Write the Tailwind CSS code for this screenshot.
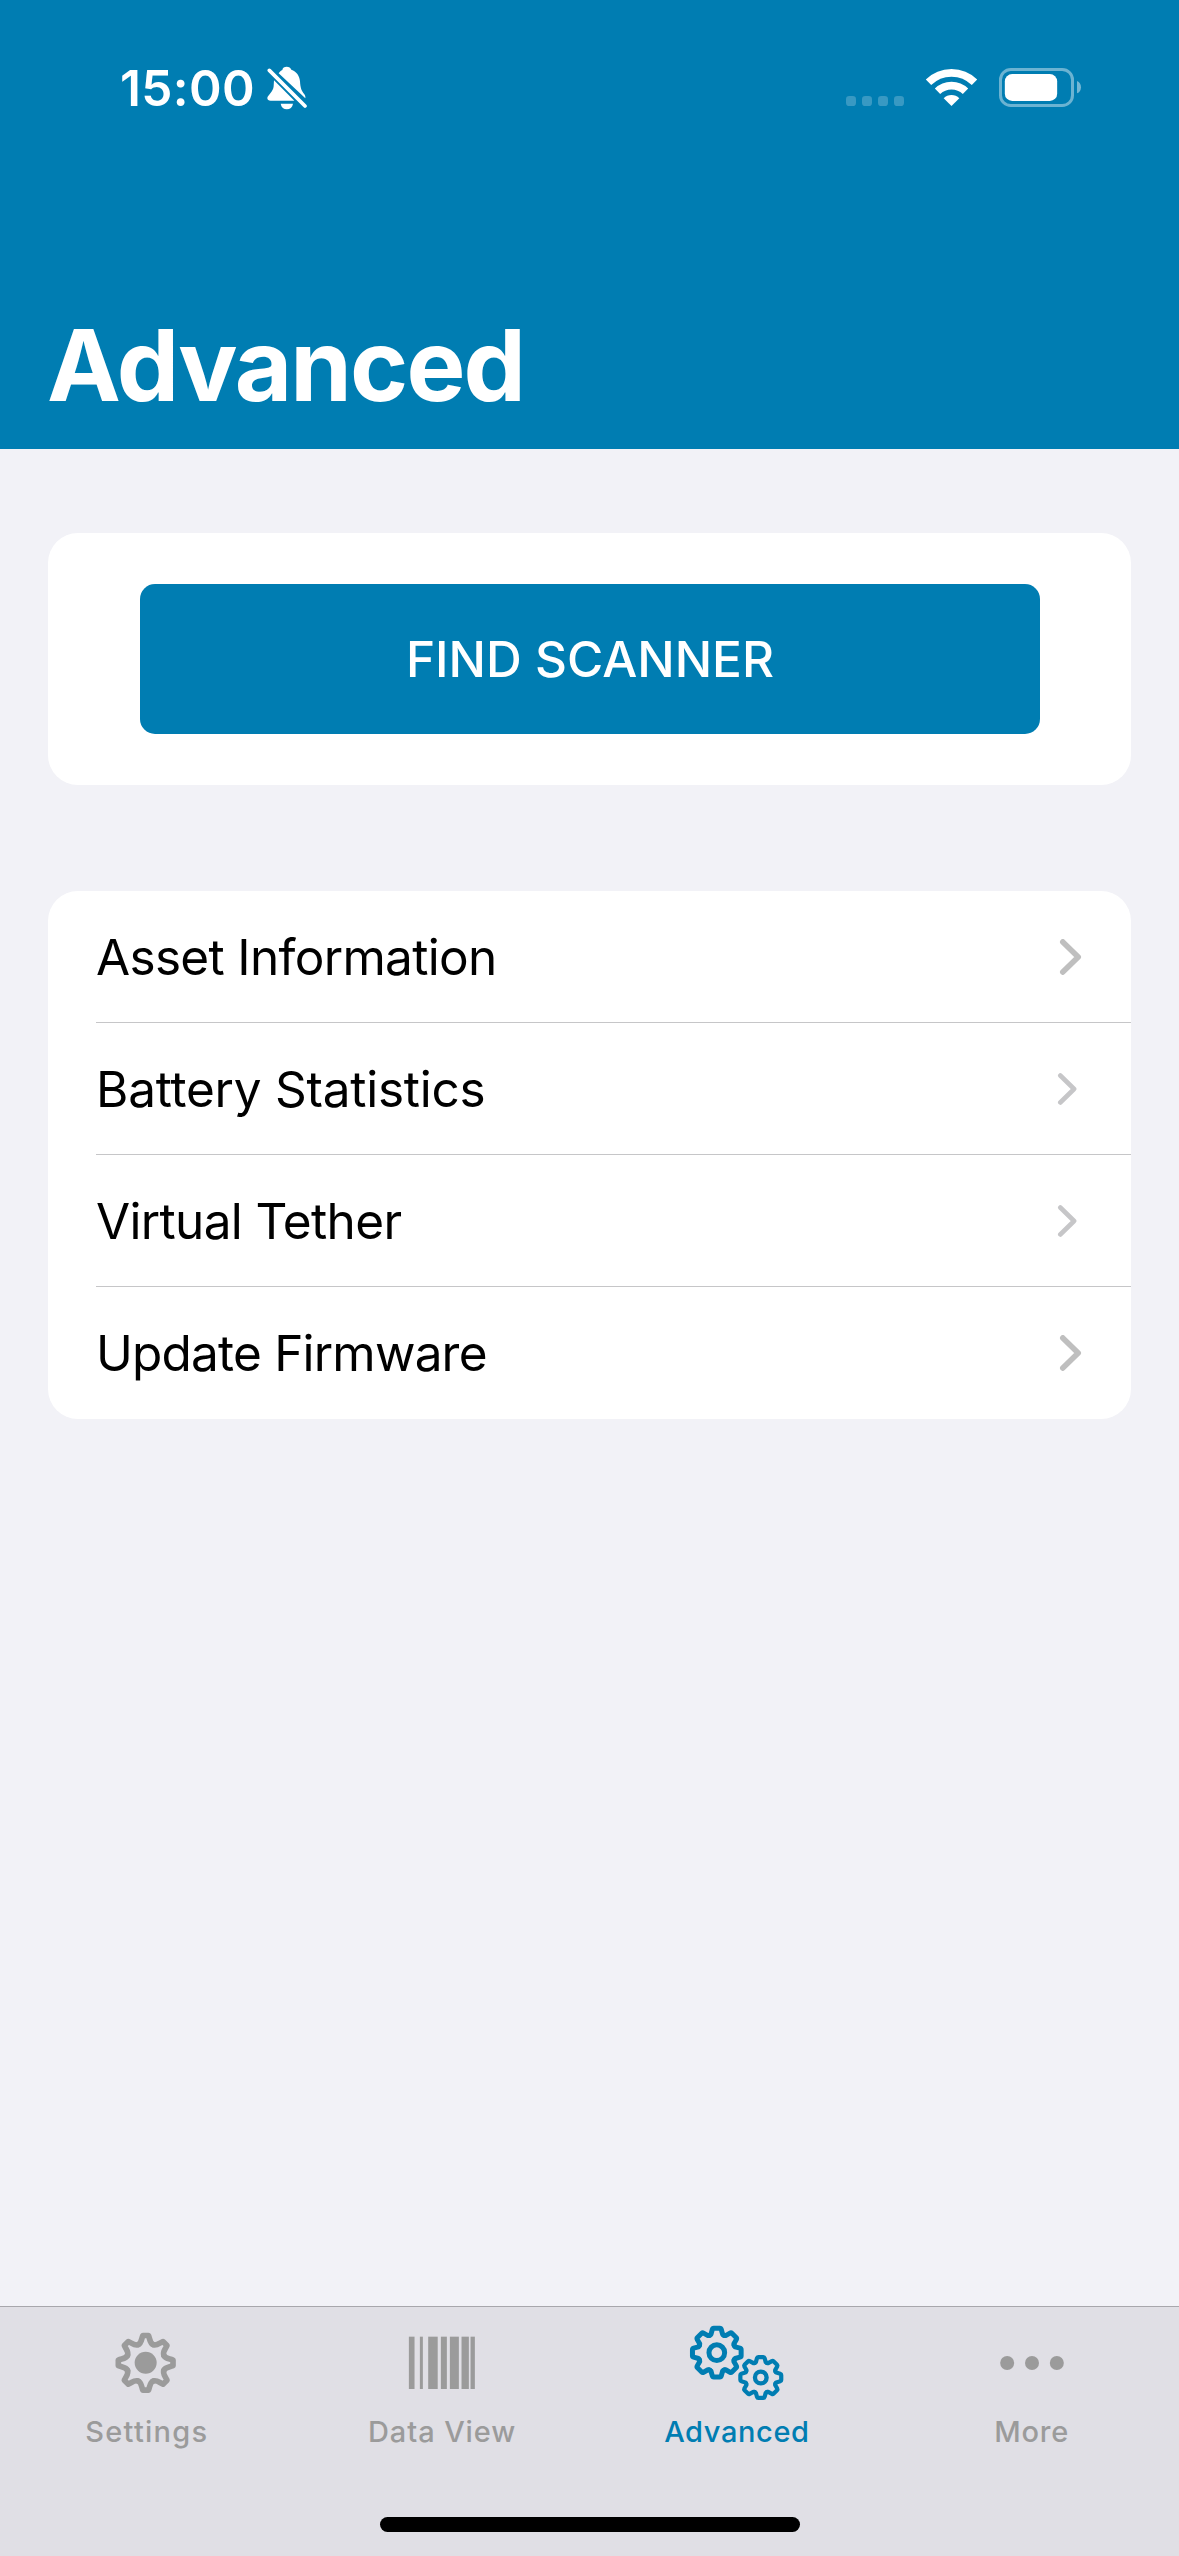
<!DOCTYPE html>
<html lang="en">
<head>
<meta charset="utf-8">
<title>Advanced</title>
<script src="https://cdn.jsdelivr.net/npm/@tailwindcss/browser@4"></script>
</head>
<body class="bg-[#f2f2f7] font-['Inter',sans-serif]">
<div class="flex flex-col w-[1179px] h-[2556px] overflow-hidden">

  <header class="flex flex-col h-[449px] shrink-0 bg-[#007db2] text-white">
    <div class="flex items-center justify-between h-[176px] pl-[120px] pr-[97px]">
      <div class="flex items-center">
        <span class="pt-[2px] text-[49.5px] leading-none font-semibold tracking-[0.38px]">15:00</span>
        <!-- muted bell -->
        <svg class="w-[40px] h-[44px] ml-[12px]" viewBox="502 49 120 132" fill="#fff">
          <path d="M537 71C540 66 544 63 548 61C549 54 554 51 561 51C568 51 573 54 575 60C590 65 600 78 601 95C602 116 606 124 614 134C616 137 618 140 617 146Z"/>
          <path d="M523 92L584 153H513C507 153 503 151 503 146C503 137 521 127 522 110Z"/>
          <path d="M543 162H580C578 173 571 179 561.500 179C552 179 545 173 543 162Z"/>
          <path d="M509 62L616 169" stroke="#fff" stroke-width="11" stroke-linecap="round"/>
        </svg>
      </div>
      <div class="flex items-center">
        <!-- signal dots, wifi, battery -->
        <svg class="w-[236px] h-[40px]" viewBox="78 54 708 120" fill="none">
          <g fill="#fff" fill-opacity=".22">
            <rect x="78" y="138" width="30" height="30" rx="10"/>
            <rect x="126" y="138" width="30" height="30" rx="10"/>
            <rect x="174" y="138" width="30" height="30" rx="10"/>
            <rect x="222" y="138" width="30" height="30" rx="10"/>
          </g>
          <path d="M325.500 97A98 98 0 0 1 463.500 97" stroke="#fff" stroke-width="23"/>
          <path d="M352.500 124A60 60 0 0 1 436.500 124" stroke="#fff" stroke-width="23"/>
          <path d="M371 144.500A34 34 0 0 1 418 144.500L394.500 168Z" fill="#fff"/>
          <rect x="541.500" y="58.500" width="216" height="108" rx="31" stroke="#fff" stroke-opacity=".42" stroke-width="9"/>
          <rect x="554.500" y="72" width="157" height="81" rx="22" fill="#fff"/>
          <path d="M771 93C787 99 787 124 771 130Z" fill="#fff" fill-opacity=".45"/>
        </svg>
      </div>
    </div>
    <h1 class="mt-auto pb-[33px] pl-[47px] text-[99px] leading-[102px] font-bold tracking-[-1.9px]">Advanced</h1>
  </header>

  <main class="flex flex-col grow px-[48px] pt-[84px] gap-[106px]">
    <section class="flex flex-col h-[252px] shrink-0 bg-white rounded-[30px] pl-[92px] pr-[91px] py-[51px]">
      <button class="h-[150px] pt-[2px] bg-[#007db2] rounded-[15px] text-white text-[49.5px] leading-none font-medium">FIND SCANNER</button>
    </section>

    <ul class="flex flex-col bg-white rounded-[30px] pl-[48px] text-black text-[49.5px] leading-none">
      <li class="flex items-center justify-between h-[132px] pr-[48px] border-b border-[#c6c6c8]">
        <span class="pt-[2px] tracking-[-0.68px]">Asset Information</span>
        <svg class="w-[24px] h-[36px]" viewBox="0 0 24 36" fill="none" stroke="#bfbfbf" stroke-width="5.600" stroke-linecap="round" stroke-linejoin="round"><path d="M3.800 2.900L19.200 18L3.800 33.100"/></svg>
      </li>
      <li class="flex items-center justify-between h-[132px] pr-[54px] border-b border-[#c6c6c8]">
        <span class="pt-[2px] tracking-[-0.24px]">Battery Statistics</span>
        <svg class="w-[20px] h-[32px]" viewBox="0 0 20 32" fill="none" stroke="#c6c6c8" stroke-width="4.600" stroke-linecap="round" stroke-linejoin="round"><path d="M3.300 2.500L17.100 16L3.300 29.500"/></svg>
      </li>
      <li class="flex items-center justify-between h-[132px] pr-[54px] border-b border-[#c6c6c8]">
        <span class="pt-[2px] tracking-[-0.66px]">Virtual Tether</span>
        <svg class="w-[20px] h-[32px]" viewBox="0 0 20 32" fill="none" stroke="#c6c6c8" stroke-width="4.600" stroke-linecap="round" stroke-linejoin="round"><path d="M3.300 2.500L17.100 16L3.300 29.500"/></svg>
      </li>
      <li class="flex items-center justify-between h-[132px] pr-[48px]">
        <span class="pt-[2px] tracking-[-0.8px]">Update Firmware</span>
        <svg class="w-[24px] h-[36px]" viewBox="0 0 24 36" fill="none" stroke="#bfbfbf" stroke-width="5.600" stroke-linecap="round" stroke-linejoin="round"><path d="M3.800 2.900L19.200 18L3.800 33.100"/></svg>
      </li>
    </ul>
  </main>

  <nav class="flex flex-col h-[250px] shrink-0 bg-[#e0dfe5] border-t border-[#a8a7ac] text-[#9b9b9b] text-[29px] leading-[37px] font-medium">
    <div class="grid grid-cols-4">
      <a class="flex flex-col items-center">
        <svg class="w-[180px] h-[106px]" viewBox="-8 51 540 318">
          <defs><path id="cog" d="M-22.600-54.500C-12-59-13-71-8.500-82H8.500C13-71 12-59 22.600-54.500"/></defs>
          <g transform="translate(258 218.500)" fill="none" stroke="#9b9b9b" stroke-width="17" stroke-linejoin="round" stroke-linecap="round">
            <use href="#cog"/><use href="#cog" transform="rotate(45)"/><use href="#cog" transform="rotate(90)"/><use href="#cog" transform="rotate(135)"/><use href="#cog" transform="rotate(180)"/><use href="#cog" transform="rotate(225)"/><use href="#cog" transform="rotate(270)"/><use href="#cog" transform="rotate(315)"/>
          </g>
          <circle cx="258" cy="218.500" r="33" fill="#9b9b9b"/>
        </svg>
        <span class="pr-[1px] tracking-[1.25px]">Settings</span>
      </a>
      <a class="flex flex-col items-center">
        <svg class="w-[180px] h-[106px]" viewBox="6.400 51 540 318" fill="#9b9b9b">
          <rect x="177" y="140" width="17" height="157"/><rect x="210" y="140" width="9" height="157"/><rect x="235" y="140" width="28.500" height="157"/><rect x="273" y="140" width="18" height="157"/><rect x="300" y="140" width="27" height="157"/><rect x="335" y="140" width="22" height="157"/><rect x="362" y="140" width="13" height="157"/>
        </svg>
        <span class="tracking-[0.9px]">Data View</span>
      </a>
      <a class="flex flex-col items-center text-[#007db2]">
        <svg class="w-[180px] h-[106px]" viewBox="-9.400 51 540 318" fill="none" stroke="#007db2" stroke-linejoin="round" stroke-linecap="round">
          <defs>
            <path id="tooth" d="M-22-52L-17.500-55L-13.500-69.500Q-12.500-73-9-73H9Q12.500-73 13.500-69.500L17.500-55L22-52"/>
            <g id="gear"><use href="#tooth"/><use href="#tooth" transform="rotate(45)"/><use href="#tooth" transform="rotate(90)"/><use href="#tooth" transform="rotate(135)"/><use href="#tooth" transform="rotate(180)"/><use href="#tooth" transform="rotate(225)"/><use href="#tooth" transform="rotate(270)"/><use href="#tooth" transform="rotate(315)"/></g>
          </defs>
          <use href="#gear" transform="translate(200 188)" stroke-width="15"/>
          <circle cx="200" cy="188" r="23.500" stroke-width="15"/>
          <use href="#gear" transform="translate(332 262.500) scale(.84)" stroke-width="15"/>
          <circle cx="332" cy="262.500" r="17.500" stroke-width="13"/>
        </svg>
        <span class="tracking-[0.6px]">Advanced</span>
      </a>
      <a class="flex flex-col items-center">
        <svg class="w-[180px] h-[106px]" viewBox="-55 51 540 318" fill="#9b9b9b">
          <circle cx="140.500" cy="219" r="21"/><circle cx="215" cy="219" r="21"/><circle cx="289.500" cy="219" r="21"/>
        </svg>
        <span class="tracking-[0.8px]">More</span>
      </a>
    </div>
    <div class="mt-auto mb-[24px] mx-auto w-[420px] h-[15px] rounded-full bg-black"></div>
  </nav>
</div>
</body>
</html>
